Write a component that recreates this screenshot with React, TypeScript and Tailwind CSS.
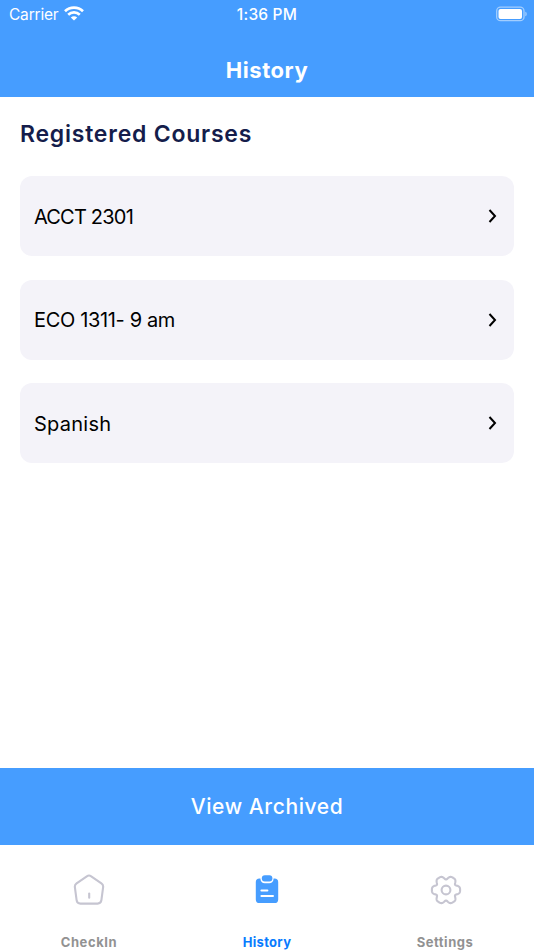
import React from "react";

const courses = [
  { name: "ACCT 2301", spacing: "tracking-[-0.8px]" },
  { name: "ECO 1311- 9 am", spacing: "tracking-[-0.35px]" },
  { name: "Spanish", spacing: "tracking-[0.25px]" },
];

function StatusBar() {
  return (
    <div className="grid h-7 grid-cols-3 items-center pl-[9px] pr-[7px] text-[15.5px] leading-7 text-white">
      <div className="flex items-center gap-[6px]">
        <span className="pt-px tracking-[-0.2px]">Carrier</span>
        <svg className="-mt-[3px]" width="20" height="15" viewBox="0 0 20 15" fill="none" stroke="white" strokeWidth="2.7">
          <path d="M1 5.2C6 .5 14 .5 19 5.2" />
          <path d="M4.2 8.7C7.5 5.6 12.5 5.6 15.8 8.7" />
          <path d="M10 14.5 6.8 11.4C8.6 9.7 11.4 9.7 13.2 11.4Z" fill="white" stroke="none" />
        </svg>
      </div>
      <span className="-ml-[2px] pt-px text-center font-medium tracking-[0.2px]">1:36 PM</span>
      <svg className="-mt-px justify-self-end" width="31" height="16" viewBox="0 0 31 16">
        <rect x=".7" y="1.2" width="27.3" height="13.5" rx="3.8" fill="none" stroke="#a2ceff" strokeWidth="1.3" />
        <rect x="2.5" y="3" width="23.5" height="10" rx="2" fill="white" />
        <path d="M29.3 5.7C31.2 6.3 31.2 9.6 29.3 10.2Z" fill="#a2ceff" />
      </svg>
    </div>
  );
}

function HomeIcon() {
  return (
    <svg width="32" height="32" viewBox="0 0 32 32" fill="none" stroke="#c6c5d1" strokeWidth="2.1" strokeLinecap="round" strokeLinejoin="round">
      <path d="M13.8 2.3Q16 .8 18.2 2.3L28.4 9.3Q30.5 10.8 30.1 13.3L28.4 26.2Q27.9 29.6 24.6 29.6H7.4Q4.1 29.6 3.6 26.2L1.9 13.3Q1.5 10.8 3.6 9.3Z" />
      <path d="M16.2 19.6V23.8" />
    </svg>
  );
}

function ClipboardIcon() {
  return (
    <svg width="32" height="32" viewBox="0 0 32 32">
      <path d="M9.4 4.4H8.5Q4.8 4.4 4.8 8.1V25.4Q4.8 29 8.5 29H23.5Q27.2 29 27.2 25.4V8.1Q27.2 4.4 23.5 4.4H22.6C22.6 7.4 20.8 9.2 18.2 9.2H13.8C11.2 9.2 9.4 7.4 9.4 4.4Z" fill="#469dff" />
      <rect x="10.8" y="1.2" width="10.6" height="6.4" rx="3" fill="#469dff" />
      <path d="M10.4 16.5H16.4M10.4 22H22" stroke="white" strokeWidth="2" strokeLinecap="round" />
    </svg>
  );
}

const gearPath =
  Array.from({ length: 180 }, (_, i) => {
    const angle = (i * Math.PI) / 90;
    const wave = Math.cos(6 * angle);
    const radius = 12.8 + 1.8 * wave - 0.5 * Math.cos(12 * angle);
    const x = 16 + radius * Math.cos(angle);
    const y = 16 + radius * Math.sin(angle);
    return `${i === 0 ? "M" : "L"}${x.toFixed(2)} ${y.toFixed(2)}`;
  }).join("") + "Z";

function GearIcon() {
  return (
    <svg className="ml-px" width="32" height="32" viewBox="0 0 32 32" fill="none" stroke="#c6c5d1" strokeWidth="2.1" strokeLinejoin="round">
      <path d={gearPath} />
      <circle cx="16" cy="16" r="4.4" />
    </svg>
  );
}

function Tab({ icon, label, spacing, active = false }: { icon: React.ReactNode; label: string; spacing: string; active?: boolean }) {
  return (
    <button className="flex flex-1 flex-col items-center pt-[28.5px]">
      {icon}
      <span className={`mt-[27.5px] text-[13px] font-bold leading-[18px] ${spacing} ${active ? "text-[#087bfe]" : "text-[#929292]"}`}>
        {label}
      </span>
    </button>
  );
}

export default function App() {
  return (
    <div className="flex h-[950px] w-full flex-col overflow-hidden bg-white font-['Inter','Liberation_Sans',sans-serif]">
      <header className="h-[97px] bg-[#469dff]">
        <StatusBar />
        <h1 className="pt-[26px] text-center text-[22px] font-bold leading-8 tracking-[0.55px] text-white">History</h1>
      </header>
      <main className="flex-1 px-5 pt-[23px]">
        <h2 className="text-[23px] font-semibold leading-7 tracking-[0.77px] text-[#151d4b]">Registered Courses</h2>
        <div className="mt-[28px] flex flex-col gap-[23.5px]">
          {courses.map((course) => (
            <button key={course.name} className="flex h-20 items-center justify-between rounded-xl bg-[#f4f3f9] pl-[14px] pr-[17px] text-left text-[20px] text-black">
              <span className={`${course.spacing} pt-px`}>{course.name}</span>
              <svg width="9" height="14" viewBox="0 0 9 14" fill="none" stroke="black" strokeWidth="2">
                <path d="M1.5 1 7 7 1.5 13" />
              </svg>
            </button>
          ))}
        </div>
      </main>
      <button className="h-[77px] shrink-0 bg-[#469dff] pt-px text-[21px] font-medium tracking-[0.6px] text-white">View Archived</button>
      <nav className="flex h-[105px] shrink-0 items-start">
        <Tab icon={<HomeIcon />} label="CheckIn" spacing="tracking-[0.6px]" />
        <Tab icon={<ClipboardIcon />} label="History" spacing="tracking-[0.3px]" active />
        <Tab icon={<GearIcon />} label="Settings" spacing="tracking-[0.5px]" />
      </nav>
    </div>
  );
}
